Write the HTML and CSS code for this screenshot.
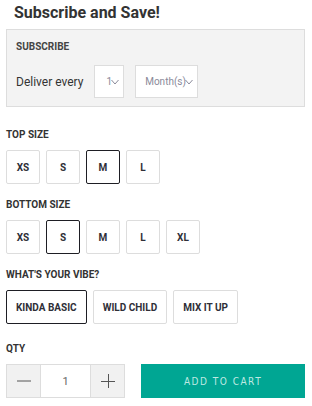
FILE: index.html
```html
<!doctype html>
<html>
<head>
	<meta charset='utf-8'>
	<title>Subscribe and Save</title>
	<link rel="stylesheet" href="styles.css">
</head>
<body>

	<h2 class='title'>Subscribe and Save!</h2>

	<div class='subscribe-box'>
		<div class='label'>SUBSCRIBE</div>
		<div class='deliver-row'>
			<span class='deliver-text'>Deliver every</span>
			<div class='fake-select select-num'>1<svg class='chev' viewBox='0 0 8 6' width='8' height='6'><path d='M0.5 1 L4 5 L7.5 1' fill='none' stroke='#8a8a9a' stroke-width='1'/></svg></div>
			<div class='fake-select select-unit'>Month(s)<svg class='chev' viewBox='0 0 8 6' width='8' height='6'><path d='M0.5 1 L4 5 L7.5 1' fill='none' stroke='#8a8a9a' stroke-width='1'/></svg></div>
		</div>
	</div>

	<div class='option top-size'>
		<div class='label'>TOP SIZE</div>
		<div class='swatches'>
			<div class='swatch'>XS</div>
			<div class='swatch'>S</div>
			<div class='swatch selected'>M</div>
			<div class='swatch'>L</div>
		</div>
	</div>

	<div class='option'>
		<div class='label'>BOTTOM SIZE</div>
		<div class='swatches'>
			<div class='swatch'>XS</div>
			<div class='swatch selected'>S</div>
			<div class='swatch'>M</div>
			<div class='swatch'>L</div>
			<div class='swatch'>XL</div>
		</div>
	</div>

	<div class='option'>
		<div class='label'>WHAT'S YOUR VIBE?</div>
		<div class='swatches'>
			<div class='swatch wide selected'>KINDA BASIC</div>
			<div class='swatch wide'>WILD CHILD</div>
			<div class='swatch wide'>MIX IT UP</div>
		</div>
	</div>

	<div class='option qty-section'>
		<div class='label'>QTY</div>
		<div class='buy-row'>
			<div class='qty'>
				<div class='qty-btn'><svg viewBox='0 0 16 16' width='16' height='16'><path d='M1 8 H15' stroke='#555' stroke-width='1'/></svg></div>
				<div class='qty-input'>1</div>
				<div class='qty-btn'><svg viewBox='0 0 16 16' width='16' height='16'><path d='M1 8.5 H15 M8.5 1 V15' stroke='#555' stroke-width='1'/></svg></div>
			</div>
			<div class='add-to-cart'>ADD TO CART</div>
		</div>
	</div>

</body>
</html>
```

FILE: styles.css
```css
body {
	margin: 0;
	padding: 0 7px 0 6px;
	font-family: Roboto, "Liberation Sans", sans-serif;
	color: #2f2f38;
	background: #fff;
}

.title {
	font-size: 16px;
	font-weight: 700;
	color: #333;
	margin: 0;
	padding: 3px 0 0 8px;
	line-height: 20px;
}

/* grey subscription panel */
.subscribe-box {
	margin-top: 6px;
	background: #f3f3f3;
	border: 1px solid #ddd;
	padding: 9px 9px 8px;
}

.label {
	font-size: 10px;
	font-weight: 700;
	line-height: 16px;
	color: #333;
}

.subscribe-box .label {
	color: #444;
}

.deliver-row {
	display: flex;
	align-items: center;
	margin-top: 10px;
}

.deliver-text {
	font-size: 12px;
	color: #333;
	width: 78px;
}

.fake-select {
	height: 31px;
	background: #fff;
	border: 1px solid #ddd;
	display: flex;
	align-items: center;
	justify-content: flex-end;
	font-size: 10px;
	color: #8a8a9a;
	padding-right: 4px;
	box-sizing: content-box;
}

.select-num {
	width: 24px;
}

.select-unit {
	width: 57px;
	margin-left: 11px;
}

.chev {
	margin-left: -1px;
}

/* option groups */
.option {
	margin-top: 13px;
}

.top-size {
	margin-top: 20px;
}

.option .label {
	margin-bottom: 7px;
}

.swatches {
	display: flex;
	gap: 6px;
}

.swatch {
	width: 32px;
	height: 32px;
	border: 1px solid #ddd;
	border-radius: 2px;
	display: flex;
	align-items: center;
	justify-content: center;
	font-size: 10px;
	font-weight: 700;
	color: #2f2f38;
}

.swatch.wide {
	width: auto;
	padding: 0 9px;
}

.swatch.selected {
	border-color: #1e1e24;
}

.qty-section {
	margin-top: 17px;
}

.buy-row {
	display: flex;
	gap: 16px;
}

.qty {
	display: flex;
	border: 1px solid #ddd;
	height: 32px;
}

.qty-btn {
	width: 33px;
	background: #f1f1f1;
	display: flex;
	align-items: center;
	justify-content: center;
}

.qty-input {
	width: 49px;
	background: #fff;
	border-left: 1px solid #ddd;
	border-right: 1px solid #ddd;
	display: flex;
	align-items: center;
	justify-content: center;
	font-size: 11px;
	color: #666;
}

.add-to-cart {
	flex: 1;
	height: 34px;
	background: #00a693;
	color: #bfe9e2;
	display: flex;
	align-items: center;
	justify-content: center;
	font-family: "DejaVu Sans Condensed", sans-serif;
	font-weight: 300;
	font-size: 10px;
	letter-spacing: 1.5px;
}
```
